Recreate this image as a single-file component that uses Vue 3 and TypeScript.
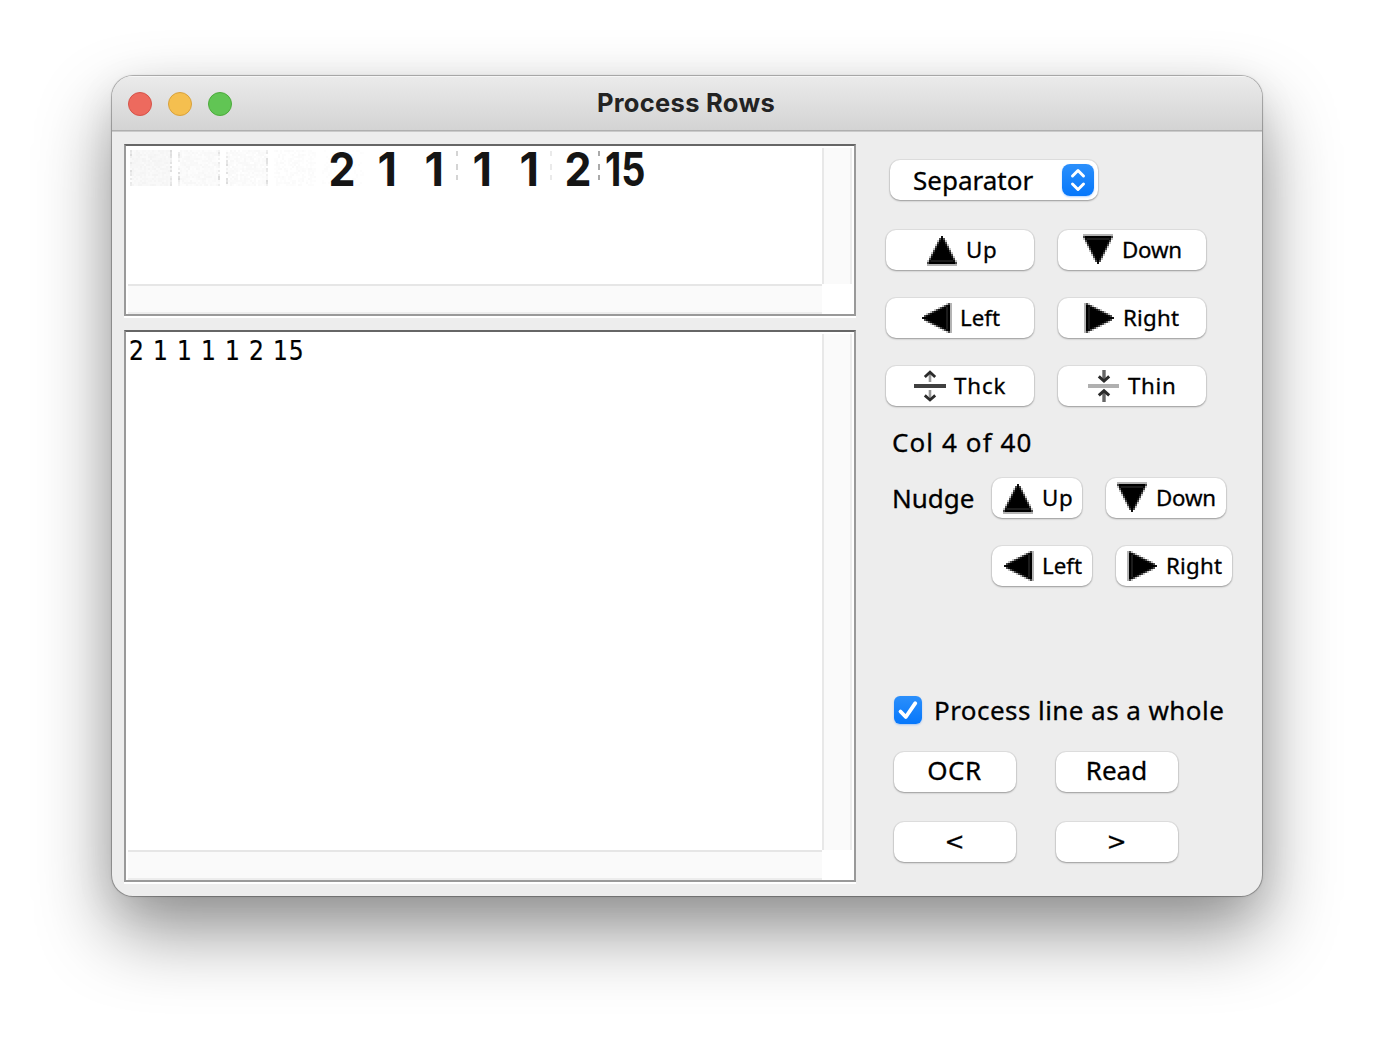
<script setup lang="ts">
type IconName = 'up' | 'down' | 'left' | 'right' | 'thick' | 'thin'
interface ToolButton { id: string; icon: IconName; label: string }
interface Pixel { x: number; y: number; fill: string }

const moveRows: ToolButton[][] = [
  [{ id: 'm-up', icon: 'up', label: 'Up' }, { id: 'm-down', icon: 'down', label: 'Down' }],
  [{ id: 'm-left', icon: 'left', label: 'Left' }, { id: 'm-right', icon: 'right', label: 'Right' }],
  [{ id: 'm-thick', icon: 'thick', label: 'Thck' }, { id: 'm-thin', icon: 'thin', label: 'Thin' }],
]
const nudgeRows: ToolButton[][] = [
  [{ id: 'n-up', icon: 'up', label: 'Up' }, { id: 'n-down', icon: 'down', label: 'Down' }],
  [{ id: 'n-left', icon: 'left', label: 'Left' }, { id: 'n-right', icon: 'right', label: 'Right' }],
]

// Low-resolution triangle pointing up, on a 15x15 grid
function trianglePixels(): Pixel[] {
  const out: Pixel[] = []
  for (let y = 0; y < 14; y++) {
    const reach = Math.floor((y + 1) / 2)
    for (let x = -reach; x <= reach; x++) {
      const edge = Math.abs(x) === reach
      const fill = edge ? (y % 2 === 0 ? '#111' : '#4a4a4a') : y === 12 ? '#1c1c1c' : '#000'
      out.push({ x: 7 + x, y, fill })
    }
    if (y > 0 && y % 2 === 0 && y < 13) {
      out.push({ x: 7 - reach - 1, y, fill: '#c4c4c4' }, { x: 7 + reach + 1, y, fill: '#c4c4c4' })
    }
  }
  for (let x = 0; x < 15; x++) out.push({ x, y: 14, fill: '#b4b4b4' })
  return out
}
const triangle = trianglePixels()

const placement: Record<string, string> = {
  up: 'translate(0 1)',
  down: 'rotate(180 7.5 7.5)',
  left: 'translate(.5 .5) rotate(-90 7.5 7.5)',
  right: 'translate(0 .5) rotate(90 7.5 7.5)',
}

// Paper grain of the scanned strip
function makeGrain(): Pixel[] {
  let seed = 17
  const next = () => (seed = (seed * 16807) % 2147483647) / 2147483647
  const out: Pixel[] = []
  const base = [246, 249, 250, 252, 254]
  for (let cell = 0; cell < 5; cell++) {
    for (let y = 0; y < 18; y++) {
      for (let x = 0; x < 21; x++) {
        const side = x === 0 || x === 20
        let v = base[cell] + Math.round(next() * 6 - 2)
        if (side && cell < 3) v = 218 + Math.round(next() * 42)
        if (v < 254) out.push({ x: cell * 24 + x, y, fill: `rgb(${v},${v},${v})` })
      }
    }
  }
  return out
}
const grain = makeGrain()

const digits = [
  { x: 198.5, w: 27, c: '2' }, { x: 247.5, w: 19.5, c: '1' }, { x: 294.5, w: 19.5, c: '1' }, { x: 342.5, w: 19.5, c: '1' },
  { x: 389.5, w: 19.5, c: '1' }, { x: 434.5, w: 27, c: '2' }, { x: 475, w: 40.5, c: '15' },
]
const perforations = [
  { x: 327, o: 0.25 }, { x: 421, o: 0.12 }, { x: 469, o: 0.5 },
]
</script>

<template>
  <main class="desktop">
    <section class="window">
      <header class="titlebar">
        <i class="light red"></i><i class="light yellow"></i><i class="light green"></i>
        <h1>Process Rows</h1>
      </header>
      <div class="body">
        <div class="left-side">
          <div class="pane strip">
            <div class="view">
              <svg class="scan" width="520" height="60" viewBox="0 0 520 60">
                <g transform="scale(2)" shape-rendering="crispEdges">
                  <rect v-for="(p, i) in grain" :key="i" :x="p.x" :y="p.y" width="1" height="1" :fill="p.fill" />
                </g>
                <line v-for="p in perforations" :key="p.x" :x1="p.x" :x2="p.x" y1="1" y2="36" stroke="#555" :stroke-opacity="p.o" stroke-width="2" stroke-dasharray="5 8 6 5" />
                <text v-for="d in digits" :key="d.x" :x="d.x" y="36" :textLength="d.w" lengthAdjust="spacingAndGlyphs">{{ d.c }}</text>
              </svg>
            </div>
            <div class="vbar"></div><div class="hbar"></div>
          </div>
          <div class="pane output">
            <div class="view"><p>2 1 1 1 1 2 15</p></div>
            <div class="vbar"></div><div class="hbar"></div>
          </div>
        </div>
        <div class="controls">
          <button class="btn combo">
            <span>Separator</span>
            <svg width="32" height="32" viewBox="0 0 32 32" fill="none" stroke="#fff" stroke-width="3" stroke-linecap="round" stroke-linejoin="round"><path d="M10.5 12 16 6.5 21.5 12M10.5 20 16 25.5 21.5 20" /></svg>
          </button>
          <div v-for="(row, i) in moveRows" :key="i" class="row moves">
            <button v-for="b in row" :key="b.id" class="btn tool" :class="b.id">
              <svg v-if="b.icon === 'thick'" class="sprite" viewBox="0 0 32 32" width="32" height="32" fill="none">
                <path d="M16 4V12M16 20V28" stroke="#999" stroke-width="2.6" />
                <path d="M10.8 7 16 2.2 21.2 7M10.8 25.4 16 30 21.2 25.4" stroke="#2b2b2b" stroke-width="2.8" />
                <path d="M0 16H32" stroke="#404040" stroke-width="4" />
              </svg>
              <svg v-else-if="b.icon === 'thin'" class="sprite" viewBox="0 0 32 32" width="32" height="32" fill="none">
                <path d="M0 16H31" stroke="#b0b0b0" stroke-width="4" />
                <path d="M16 0V11M16 21V32" stroke="#666" stroke-width="3.4" />
                <path d="M10.8 6.4 16 11 21.2 6.4M10.8 25.4 16 20.8 21.2 25.4" stroke="#2b2b2b" stroke-width="3" />
              </svg>
              <svg v-else class="sprite" viewBox="0 0 16 16" width="32" height="32" shape-rendering="crispEdges">
                <g :transform="placement[b.icon]"><rect v-for="(p, k) in triangle" :key="k" :x="p.x" :y="p.y" width="1" height="1" :fill="p.fill" /></g>
              </svg>
              <span :class="'t-' + b.icon">{{ b.label }}</span>
            </button>
          </div>
          <p class="count">Col 4 of 40</p>
          <div class="nudge">
            <span class="nudge-label">Nudge</span>
            <div>
              <div v-for="(row, i) in nudgeRows" :key="i" class="row">
                <button v-for="b in row" :key="b.id" class="btn tool" :class="b.id">
                  <svg class="sprite" viewBox="0 0 16 16" width="32" height="32" shape-rendering="crispEdges">
                    <g :transform="placement[b.icon]"><rect v-for="(p, k) in triangle" :key="k" :x="p.x" :y="p.y" width="1" height="1" :fill="p.fill" /></g>
                  </svg>
                  <span :class="'t-' + b.icon">{{ b.label }}</span>
                </button>
              </div>
            </div>
          </div>
          <div class="check">
            <svg width="28" height="28" viewBox="0 0 28 28" fill="none" stroke="#fff" stroke-width="3.8" stroke-linecap="round" stroke-linejoin="round"><path d="M6.5 15.5 11.8 21 21.3 7.2" /></svg>
            <span>Process line as a whole</span>
          </div>
          <div class="actions">
            <button class="btn"><span class="ocr">OCR</span></button><button class="btn"><span class="read">Read</span></button>
            <button class="btn sym">&lt;</button><button class="btn sym">&gt;</button>
          </div>
        </div>
      </div>
    </section>
  </main>
</template>

<style>
body { background: #fff; overflow: hidden; }
</style>
<style scoped>
* { box-sizing: border-box; }
.desktop { width: 1374px; height: 1044px; padding: 76px 112px; overflow: hidden; font-family: "Noto Sans", "Open Sans", sans-serif; font-size: 26px; color: #000; }
.window { width: 1150px; height: 820px; border-radius: 21px; background: #ededed; overflow: hidden; box-shadow: 0 0 0 1px rgba(0,0,0,.23), 0 0 3px rgba(0,0,0,.18), 0 36px 74px rgba(0,0,0,.42), 0 12px 40px rgba(0,0,0,.08); }
.titlebar { height: 56px; display: flex; align-items: center; gap: 16px; padding: 0 16px; background: linear-gradient(#ebebeb, #d3d3d3); border-bottom: 1px solid #cacaca; box-shadow: inset 0 1px #f6f6f6, inset 0 -1px #afafaf; }
.light { width: 24px; height: 24px; border-radius: 50%; border: 1px solid; }
.red { background: #ed6a5e; border-color: #d55349; }
.yellow { background: #f5bf4f; border-color: #d8a13c; }
.green { background: #61c554; border-color: #4caa3b; }
h1 { flex: 1; margin: 0 122px 2px 0; text-align: center; font: 700 25.5px Inter, sans-serif; letter-spacing: .3px; color: #232323; }
.body { display: flex; }
.left-side { width: 732px; margin: 12px 30px 0 12px; display: flex; flex-direction: column; gap: 14px; }
.pane { display: grid; grid-template-columns: 696px 32px; background: #fff; border: 2px solid #999; border-top-color: #666; box-shadow: 0 2px #fff; }
.strip { height: 172px; grid-template-rows: 138px 30px; }
.output { height: 552px; grid-template-rows: 518px 30px; }
.vbar { margin: 2px 2px 0 0; background: #fafafa; border: solid #e8e8e8; border-width: 0 2px; border-right-color: #ededed; }
.hbar { margin-left: 2px; background: #fafafa; border: solid #e6e6e6; border-width: 2px 0; border-bottom-color: #ededed; }
.scan { display: block; overflow: visible; margin: 4px 0 0 4px; font: 700 46.5px Inter, sans-serif; fill: #151515; }
.output p { margin: 4px 0 0 3px; font: 26px/30px "DejaVu Sans Condensed", "DejaVu Sans", sans-serif; font-stretch: condensed; letter-spacing: .85px; -webkit-text-stroke: .2px #000; }
.controls { padding-top: 28px; width: 370px; }
button { font: inherit; color: inherit; }
.controls span, .count { -webkit-text-stroke: .3px #000; }
.btn { display: flex; align-items: center; height: 40px; padding: 0; border: 0; border-radius: 10px; background: #fff; box-shadow: 0 0 0 1px rgba(0,0,0,.055), 0 1px 2px rgba(0,0,0,.32); }
.combo { width: 208px; margin: 0 0 30px 4px; padding: 0 4px 0 23px; justify-content: space-between; }
.combo svg { border-radius: 8px; background: linear-gradient(#2b8ffb, #0677fb); box-shadow: 0 1px 2px rgba(0,110,255,.3); }
.row { display: flex; gap: 24px; margin-bottom: 28px; }
.tool { font-size: 22.3px; white-space: nowrap; }
.tool span { margin-top: -2px; }
.moves .tool { width: 148px; }
.sprite { flex: none; margin-right: 7px; }
.m-up { padding-left: 41px; } .m-down { padding-left: 25px; }
.m-left { padding-left: 35px; } .m-right { padding-left: 26px; }
.m-thick { padding-left: 28px; } .m-thin { padding-left: 30px; }
.t-up { letter-spacing: .6px; } .t-down { letter-spacing: -.2px; }
.t-left { letter-spacing: 0; }
.t-right { letter-spacing: .2px; }
.t-thick, .t-thin { margin-left: 1px; }
.t-thick { letter-spacing: .9px; } .t-thin { letter-spacing: .7px; }
.count { margin: -12px 0 15px 6px; height: 41px; line-height: 41px; letter-spacing: 1.1px; }
.nudge { display: flex; height: 136px; }
.nudge-label { flex: none; width: 106px; padding-left: 6px; line-height: 41px; }
.nudge .tool { padding-left: 11px; }
.n-up { width: 90px; } .n-down { width: 120px; } .n-left { width: 100px; } .n-right { width: 116px; }
.check { display: flex; align-items: center; height: 28px; margin: 82px 0 28px 8px; gap: 12px; letter-spacing: .44px; white-space: nowrap; }
.check svg { flex: none; border-radius: 6px; background: linear-gradient(#2b8ffb, #0677fb); box-shadow: 0 1px 2px rgba(0,110,255,.3); }
.actions { display: grid; grid-template-columns: 122px 122px; gap: 30px 40px; margin-left: 8px; }
.actions .btn { justify-content: center; }
.actions .btn span { margin: -4px 1px 0 0; }
.ocr { letter-spacing: .6px; }
.btn.sym { font: 24px "DejaVu Sans", sans-serif; padding-right: 1px; -webkit-text-stroke: .2px #000; }
</style>
